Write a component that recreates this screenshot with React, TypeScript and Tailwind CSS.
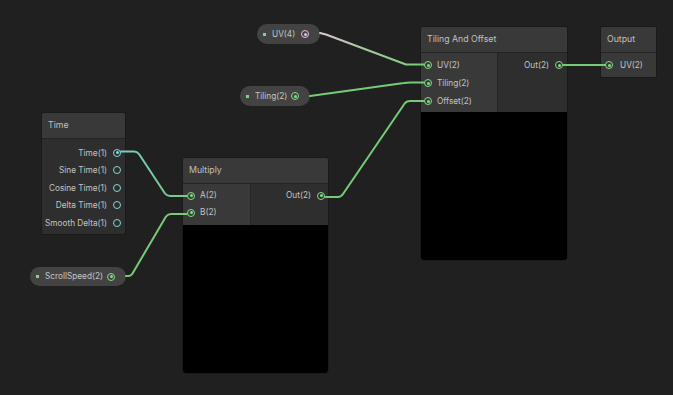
import React from "react";

type Kind = "green" | "teal" | "pink";

const ringCls: Record<Kind, string> = {
  green: "border-[#86dc86]",
  teal: "border-[#80d8d8]",
  pink: "border-[#f0b8e8]",
};
const dotCls: Record<Kind, string> = {
  green: "bg-[#86dc86]",
  teal: "bg-[#80d8d8]",
  pink: "bg-[#f0b8e8]",
};

function Port({ kind = "green", on = true }: { kind?: Kind; on?: boolean }) {
  return (
    <div
      className={`w-[8px] h-[8px] shrink-0 rounded-full border-[1.5px] ${ringCls[kind]} flex items-center justify-center`}
    >
      {on && <div className={`w-[3px] h-[3px] rounded-full ${dotCls[kind]}`} />}
    </div>
  );
}

function Header({ title }: { title: string }) {
  return (
    <div className="h-[26px] bg-[#393939] px-[6px] flex items-center text-[8.75px] text-[#c0c0c0] whitespace-nowrap border-b border-[#242424] rounded-t-[2px]">
      {title}
    </div>
  );
}

function InRow({ label, h }: { label: string; h: string }) {
  return (
    <div className={`${h} flex items-center gap-[5px]`}>
      <Port />
      <span className="text-[8.25px] text-[#c4c4c4] whitespace-nowrap">{label}</span>
    </div>
  );
}

function OutRow({ label, h, kind = "green", on = true }: { label: string; h: string; kind?: Kind; on?: boolean }) {
  return (
    <div className={`${h} flex items-center justify-end gap-[6px]`}>
      <span className="text-[8.25px] text-[#c4c4c4] whitespace-nowrap">{label}</span>
      <Port kind={kind} on={on} />
    </div>
  );
}

function Pill({
  label,
  cls,
  kind = "green",
}: {
  label: string;
  cls: string;
  kind?: Kind;
}) {
  return (
    <div
      className={`absolute ${cls} rounded-full bg-[#434343] flex items-center pl-[6px] pr-[11px]`}
    >
      <div className="w-[3px] h-[3px] bg-[#7fd67f] shrink-0" />
      <span className="ml-[6px] text-[8.25px] text-[#c4c4c4] whitespace-nowrap">{label}</span>
      <div className="ml-auto">
        <Port kind={kind} />
      </div>
    </div>
  );
}

export default function App() {
  return (
    <div className="relative w-[673px] h-[395px] bg-[#202020] overflow-hidden font-['Inter',sans-serif]">
      {/* Time node */}
      <div className="absolute left-[41px] top-[112px] w-[85px] rounded-[2px] bg-[#2e2e2e] border border-[#1a1a1a]">
        <Header title="Time" />
        <div className="pt-[5px] pb-[2px] pr-[4px]">
          <OutRow label="Time(1)" h="h-[17.5px]" kind="teal" />
          <OutRow label="Sine Time(1)" h="h-[17.5px]" kind="teal" on={false} />
          <OutRow label="Cosine Time(1)" h="h-[17.5px]" kind="teal" on={false} />
          <OutRow label="Delta Time(1)" h="h-[17.5px]" kind="teal" on={false} />
          <OutRow label="Smooth Delta(1)" h="h-[17.5px]" kind="teal" on={false} />
        </div>
      </div>

      {/* Multiply node */}
      <div className="absolute left-[182px] top-[157px] w-[147px] rounded-[3px] bg-[#2e2e2e] border border-[#1a1a1a]">
        <Header title="Multiply" />
        <div className="flex">
          <div className="w-[68px] bg-[#393939] pl-[4px] pt-[3px] pb-[4px] border-r border-[#262626]">
            <InRow label="A(2)" h="h-[17px]" />
            <InRow label="B(2)" h="h-[17px]" />
          </div>
          <div className="flex-1 pr-[3px] pt-[3px]">
            <OutRow label="Out(2)" h="h-[17px]" />
          </div>
        </div>
        <div className="h-[148px] bg-black rounded-b-[3px]" />
      </div>

      {/* Tiling And Offset node */}
      <div className="absolute left-[420px] top-[26px] w-[148px] rounded-[3px] bg-[#2e2e2e] border border-[#1a1a1a]">
        <Header title="Tiling And Offset" />
        <div className="flex">
          <div className="w-[77px] bg-[#393939] pl-[3px] pt-[3px] pb-[2px] border-r border-[#262626]">
            <InRow label="UV(2)" h="h-[18px]" />
            <InRow label="Tiling(2)" h="h-[18px]" />
            <InRow label="Offset(2)" h="h-[18px]" />
          </div>
          <div className="flex-1 pr-[4px] pt-[3px]">
            <OutRow label="Out(2)" h="h-[18px]" />
          </div>
        </div>
        <div className="h-[148px] bg-black rounded-b-[3px]" />
      </div>

      {/* Output node */}
      <div className="absolute left-[600px] top-[26px] w-[57px] rounded-[2px] bg-[#393939] border border-[#1a1a1a]">
        <Header title="Output" />
        <div className="pl-[4px] pt-[3px] pb-[3px]">
          <div className="h-[18px] flex items-center gap-[7px]">
            <Port />
            <span className="text-[8.25px] text-[#c4c4c4]">UV(2)</span>
          </div>
        </div>
      </div>

      {/* Property pills */}
      <Pill label="UV(4)" cls="left-[257px] top-[24px] w-[63px] h-[20px]" kind="pink" />
      <Pill label="Tiling(2)" cls="left-[240px] top-[86px] w-[70px] h-[20px]" />
      <Pill label="ScrollSpeed(2)" cls="left-[30px] top-[267px] w-[96px] h-[19px]" />

      {/* Wires */}
      <svg
        className="absolute left-0 top-0 pointer-events-none"
        width={673}
        height={395}
        viewBox="0 0 673 395"
      >
        <defs>
          <linearGradient id="uvg" gradientUnits="userSpaceOnUse" x1="320" y1="0" x2="424" y2="0">
            <stop offset="0" stopColor="#d8c4d6" />
            <stop offset="0.45" stopColor="#a8c8a0" />
            <stop offset="1" stopColor="#76cc76" />
          </linearGradient>
          <linearGradient id="tg" gradientUnits="userSpaceOnUse" x1="121" y1="0" x2="187" y2="0">
            <stop offset="0" stopColor="#74cec4" />
            <stop offset="1" stopColor="#76cc80" />
          </linearGradient>
        </defs>
        <g fill="none" strokeWidth={2} strokeLinejoin="round" strokeLinecap="round">
          <path d="M320 33 L326 34.5 L406 64.5 L424 64.5" stroke="url(#uvg)" />
          <path d="M310 96 L404 83 Q407 82.5 410 82.5 L424 82.5" stroke="#76cc76" />
          <path d="M325 197 L338 197 Q341 197 343 194 L405 103 Q407 101 410 101 L424 101" stroke="#76cc76" />
          <path d="M121 151.5 L134 151.5 Q137 151.5 139 154 L165 193.5 Q167 196 170 196 L187 196" stroke="url(#tg)" />
          <path d="M126 276 L129 276 Q131 276 132.5 273.5 L166 216.5 Q168 214 171 214 L187 214" stroke="#76cc76" />
          <path d="M563 65 L605 65" stroke="#76cc76" />
        </g>
      </svg>
    </div>
  );
}
